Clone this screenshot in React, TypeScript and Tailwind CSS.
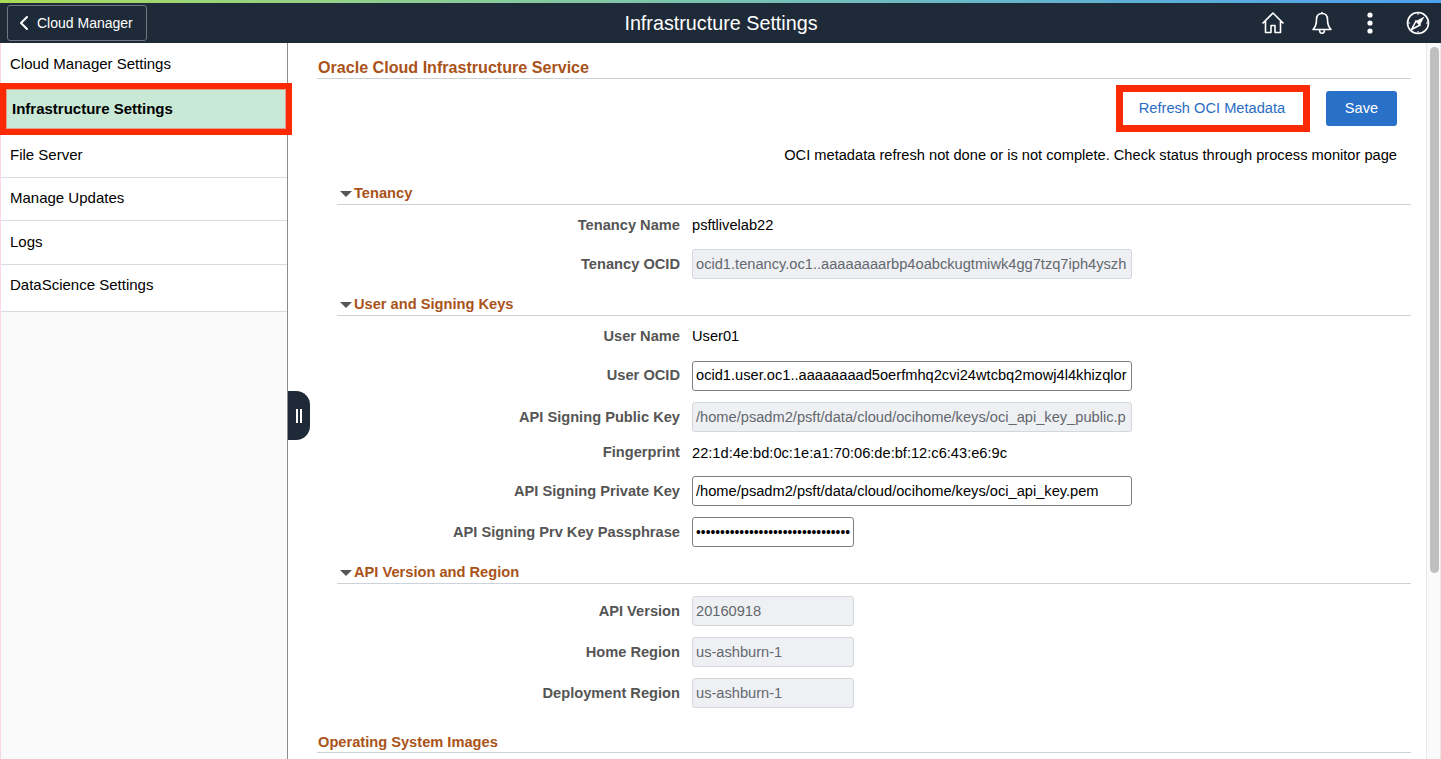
import React from 'react';
import { ChevronLeft } from 'lucide-react';

const menuItems = [
  { label: 'File Server', h: 'h-[43px] pb-[1px]' },
  { label: 'Manage Updates', h: 'h-[43px] pb-[2px]' },
  { label: 'Logs', h: 'h-[44px]' },
  { label: 'DataScience Settings', h: 'h-[47px] pb-[6px]' },
];

const Section = ({ title, className }: { title: string; className: string }) => (
  <div className={`flex h-[22px] items-end border-b border-[#cdd1d8] pb-[3px] ${className}`}>
    <span className="mb-[4px] mr-[2px] ml-[3px] h-0 w-0 border-x-[6px] border-t-[6px] border-x-transparent border-t-[#555]" />
    <span className="text-[14.650px] font-bold leading-[16px] text-[#a9531a]">{title}</span>
  </div>
);

const Row = ({ label, className, children }: { label: string; className: string; children: React.ReactNode }) => (
  <div className={`flex items-center ${className}`}>
    <div className="w-[343px] pt-[2px] text-right text-[14.650px] font-bold text-[#555]">{label}</div>
    <div className="ml-[12px] text-[14.650px]">{children}</div>
  </div>
);

const InputRow = ({ label, className, children }: { label: string; className: string; children: React.ReactNode }) => (
  <div className={`flex items-center ${className}`}>
    <div className="w-[343px] text-right text-[14.650px] font-bold text-[#555]">{label}</div>
    <div className="ml-[12px]">{children}</div>
  </div>
);

const Input = ({ value, disabled, width, small, low }: { value: string; disabled?: boolean; width: string; small?: boolean; low?: boolean }) => (
  <div
    className={`flex h-[30px] items-center overflow-hidden whitespace-nowrap rounded-[3px] border pl-[3px] ${small ? 'text-[13.750px]' : 'text-[14.650px]'} ${low ? 'pt-[2px]' : ''} ${width} ${
      disabled ? 'border-[#d3d6db] bg-[#eff0f3] pt-[2px] text-[#636870]' : 'border-[#7a7f87] bg-white text-black'
    }`}
  >
    {value}
  </div>
);

const App = () => {
  return (
    <div className="flex h-[759px] w-[1441px] flex-col overflow-hidden bg-white font-['Liberation_Sans',Arial,sans-serif] text-black">
      <div className="h-[3px] bg-gradient-to-r from-[#a9dc55] to-[#4da0ee]" />
      <header className="relative flex h-[40px] items-center justify-between bg-[#1e2a38] pl-[7px] pr-[11px]">
        <button className="flex h-[36px] w-[140px] items-center rounded-[3px] border border-[#6f7883] pl-[4px] text-[14px] text-white">
          <ChevronLeft size={24} strokeWidth={2} />
          <span className="ml-[1px]">Cloud Manager</span>
        </button>
        <h1 className="absolute left-0 right-0 pl-[1px] pt-[1px] text-center text-[19.750px] text-white">Infrastructure Settings</h1>
        <div className="flex items-center">
          <svg width="24" height="24" viewBox="0 0 24 24" fill="none" stroke="white" strokeWidth="1.6" strokeLinejoin="round" className="mr-[26px]">
            <path d="M1.500 12.500 12 2l10.500 10.500M4.500 10v11.500h5.500v-7h4v7h5.500V10" />
          </svg>
          <svg width="22" height="24" viewBox="0 0 22 24" fill="none" stroke="white" strokeWidth="1.6" strokeLinejoin="round" className="mr-[34px]">
            <path d="M11 2.500c-3.500 0-5.500 2.500-5.500 6 0 5-1.500 8-3.500 10h18c-2-2-3.500-5-3.500-10 0-3.500-2-6-5.500-6Z" />
            <path d="M11 1v1.500M8.500 18.500c0 5 5 5 5 0" />
          </svg>
          <svg width="6" height="22" viewBox="0 0 6 22" fill="white" className="mr-[33px]">
            <circle cx="3" cy="3" r="2.600" />
            <circle cx="3" cy="11" r="2.600" />
            <circle cx="3" cy="19" r="2.600" />
          </svg>
          <svg width="24" height="24" viewBox="0 0 24 24" fill="none" stroke="white" strokeWidth="1.600">
            <circle cx="12" cy="12" r="10.500" />
            <path d="M18.500 5.500 14 14l-4-4Z" fill="white" stroke="none" />
            <path d="M5.500 18.500 10 10l4 4Z" />
            <path d="M12 2v2M12 20v2M2 12h2M20 12h2" strokeWidth="1" />
          </svg>
        </div>
      </header>

      <div className="relative flex min-h-0 flex-1">
        <aside className="w-[288px] shrink-0 border-r border-l border-r-[#8c8c8c] border-l-[#f8d7ea] bg-[#fafafa]">
          <div className="flex h-[40px] items-center bg-white pl-[9px] pt-[2px] text-[15px]">Cloud Manager Settings</div>
          <div className="relative flex h-[52px] items-center">
            <div className="absolute -left-[1px] top-0 h-[52px] w-[292px] border-[6px] border-[#fb2a05] bg-[#c9e8d6] outline outline-1 -outline-offset-[7px] outline-[#e0a08c]" />
            <span className="relative ml-[11px] text-[15px] font-bold">Infrastructure Settings</span>
          </div>
          {menuItems.map((item) => (
            <div key={item.label} className={`flex items-center border-b border-[#d8dbe0] bg-white pl-[9px] text-[15px] ${item.h}`}>
              {item.label}
            </div>
          ))}
        </aside>

        <div className="absolute left-[288px] top-[348px] flex h-[49px] w-[22px] items-center justify-center gap-[2px] rounded-r-[14px] bg-[#1e2a38]">
          <span className="h-[14px] w-[2px] bg-white" />
          <span className="h-[14px] w-[2px] bg-white" />
        </div>

        <main className="min-w-0 flex-1 pl-[29px] pr-[15px]">
          <div className="mt-[15px] flex h-[21px] items-start border-b border-[#cdd1d8] text-[16.100px] font-bold text-[#a9531a]">
            <span className="ml-[1px] leading-[18px]">Oracle Cloud Infrastructure Service</span>
          </div>
          <div className="mt-[6px] flex items-center justify-end pr-[14px]">
            <div className="mr-[16px] flex h-[47px] w-[194px] items-center justify-center border-[7px] border-[#fb2a05] bg-white pr-[2px] text-[14.650px] text-[#2b6cc4]">
              Refresh OCI Metadata
            </div>
            <button className="h-[35px] w-[71px] rounded-[3px] bg-[#2870c8] text-[14.650px] text-white">Save</button>
          </div>
          <p className="mt-[15px] pr-[14px] text-right text-[14.650px] leading-[16px]">
            OCI metadata refresh not done or is not complete. Check status through process monitor page
          </p>

          <div className="ml-[20px]">
            <Section title="Tenancy" className="mt-[20px]" />
            <Row label="Tenancy Name" className="mt-[10px] h-[20px]"><span className="block pt-[2px]">psftlivelab22</span></Row>
            <Row label="Tenancy OCID" className="mt-[14px] h-[30px]">
              <Input disabled width="w-[440px]" value="ocid1.tenancy.oc1..aaaaaaaarbp4oabckugtmiwk4gg7tzq7iph4yszh" />
            </Row>

            <Section title="User and Signing Keys" className="mt-[15px]" />
            <Row label="User Name" className="mt-[10px] h-[20px]"><span className="block pt-[2px]">User01</span></Row>
            <InputRow label="User OCID" className="mt-[15px] h-[30px]">
              <Input width="w-[440px]" value="ocid1.user.oc1..aaaaaaaad5oerfmhq2cvi24wtcbq2mowj4l4khizqlor" />
            </InputRow>
            <Row label="API Signing Public Key" className="mt-[11px] h-[30px]">
              <Input disabled width="w-[440px]" value="/home/psadm2/psft/data/cloud/ocihome/keys/oci_api_key_public.p" />
            </Row>
            <InputRow label="Fingerprint" className="mt-[11px] h-[20px]">
              <span className="text-[14.650px]">22:1d:4e:bd:0c:1e:a1:70:06:de:bf:12:c6:43:e6:9c</span>
            </InputRow>
            <Row label="API Signing Private Key" className="mt-[13px] h-[30px]">
              <Input low width="w-[440px]" value="/home/psadm2/psft/data/cloud/ocihome/keys/oci_api_key.pem" />
            </Row>
            <Row label="API Signing Prv Key Passphrase" className="mt-[11px] h-[30px]">
              <Input small low width="w-[162px]" value="••••••••••••••••••••••••••••••••" />
            </Row>

            <Section title="API Version and Region" className="mt-[15px]" />
            <Row label="API Version" className="mt-[12px] h-[30px]">
              <Input disabled width="w-[162px]" value="20160918" />
            </Row>
            <Row label="Home Region" className="mt-[11px] h-[30px]">
              <Input disabled width="w-[162px]" value="us-ashburn-1" />
            </Row>
            <Row label="Deployment Region" className="mt-[11px] h-[30px]">
              <Input disabled width="w-[162px]" value="us-ashburn-1" />
            </Row>
          </div>

          <div className="mt-[24px] flex h-[21px] items-start border-b border-[#cdd1d8] text-[14.650px] font-bold text-[#a9531a]">
            <span className="ml-[1px] leading-[20px]">Operating System Images</span>
          </div>
        </main>

        <div className="w-[15px] shrink-0 border-x border-[#e8e8e8] bg-[#fafafa] pl-[3px] pt-[4px]">
          <div className="h-[526px] w-[9px] rounded-full bg-[#bfbfbf]" />
        </div>
      </div>
    </div>
  );
};

export default App;
